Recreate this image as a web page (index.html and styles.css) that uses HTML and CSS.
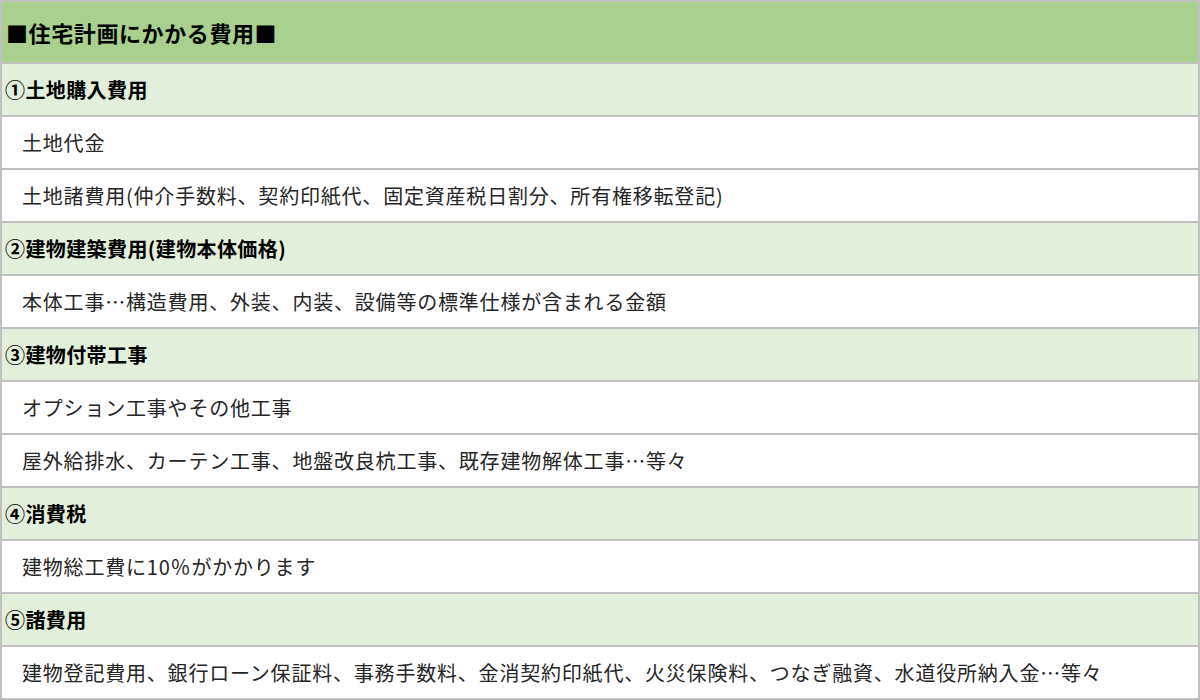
FILE: index.html
```html
<!DOCTYPE html>
<html lang="ja">
<head>
<meta charset="utf-8">
<title>住宅計画にかかる費用</title>
<link rel="stylesheet" href="styles.css">
</head>
<body>
<div class="sheet">
  <div class="row head">■住宅計画にかかる費用■</div>
  <div class="row sec">①土地購入費用</div>
  <div class="row item">土地代金</div>
  <div class="row item">土地諸費用(仲介手数料、契約印紙代、固定資産税日割分、所有権移転登記)</div>
  <div class="row sec">②建物建築費用(建物本体価格)</div>
  <div class="row item">本体工事…構造費用、外装、内装、設備等の標準仕様が含まれる金額</div>
  <div class="row sec">③建物付帯工事</div>
  <div class="row item">オプション工事やその他工事</div>
  <div class="row item">屋外給排水、カーテン工事、地盤改良杭工事、既存建物解体工事…等々</div>
  <div class="row sec">④消費税</div>
  <div class="row item">建物総工費に10％がかかります</div>
  <div class="row sec">⑤諸費用</div>
  <div class="row item">建物登記費用、銀行ローン保証料、事務手数料、金消契約印紙代、火災保険料、つなぎ融資、水道役所納入金…等々</div>
</div>
</body>
</html>
```

FILE: styles.css
```css
html, body {
  margin: 0;
  padding: 0;
  background: #ffffff;
}

body {
  font-family: "Noto Sans CJK JP", "Noto Sans", sans-serif;
  width: 1200px;
  height: 700px;
  overflow: hidden;
}

.sheet {
  box-sizing: border-box;
  width: 1200px;
  height: 700px;
  border: 2px solid #c0c0c0;
  display: flex;
  flex-direction: column;
}

.row {
  display: flex;
  align-items: center;
  height: 51px;
  flex: none;
  border-top: 2px solid #c0c0c0;
  white-space: nowrap;
}

.head {
  height: 60px;
  border-top: none;
  background: #a9d08e;
  color: #000;
  font-weight: bold;
  font-size: 22px;
  letter-spacing: 0.6px;
  padding-left: 4px;
}

.sec {
  background: #e2efda;
  color: #000;
  font-weight: bold;
  font-size: 20px;
  letter-spacing: 0.4px;
  padding-left: 3px;
}

.item {
  background: #ffffff;
  color: #262626;
  font-size: 20px;
  letter-spacing: 0.8px;
  padding-left: 20px;
}
```
